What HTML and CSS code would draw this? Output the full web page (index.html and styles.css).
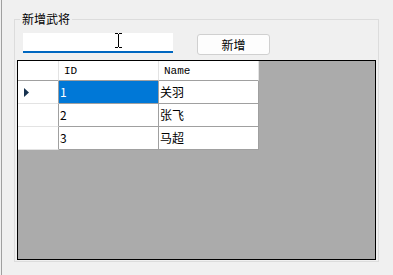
FILE: index.html
```html
<!DOCTYPE html>
<html lang="zh-CN">
<head>
<meta charset="utf-8">
<title>新增武将</title>
<link rel="stylesheet" href="styles.css">
</head>
<body>
<div class="window">
  <fieldset class="group">
    <legend class="group-title">新增武将</legend>
    <div class="toolbar">
      <div class="textbox-wrap">
        <input class="textbox" type="text" value="">
        <svg class="ibeam" width="7" height="16" viewBox="0 0 7 16" aria-hidden="true">
          <rect x="0" y="0" width="3" height="1" fill="#000"/>
          <rect x="4" y="0" width="3" height="1" fill="#000"/>
          <rect x="3" y="1" width="1" height="13" fill="#000"/>
          <rect x="0" y="14" width="3" height="1" fill="#000"/>
          <rect x="4" y="14" width="3" height="1" fill="#000"/>
        </svg>
      </div>
      <button class="btn" type="button">新增</button>
    </div>
    <div class="grid">
      <div class="table">
        <div class="cell head"></div>
        <div class="cell head">ID</div>
        <div class="cell head">Name</div>

        <div class="cell rowhead">
          <svg class="current" width="6" height="9" viewBox="0 0 6 9" aria-hidden="true"><polygon points="0,0 5,4.5 0,9" fill="#17324f"/></svg>
        </div>
        <div class="cell data selected">1</div>
        <div class="cell data">关羽</div>

        <div class="cell rowhead"></div>
        <div class="cell data">2</div>
        <div class="cell data">张飞</div>

        <div class="cell rowhead"></div>
        <div class="cell data">3</div>
        <div class="cell data">马超</div>
      </div>
    </div>
  </fieldset>
</div>
</body>
</html>
```

FILE: styles.css
```css
* {
  box-sizing: border-box;
}

html,
body {
  margin: 0;
  padding: 0;
}

body {
  width: 393px;
  height: 275px;
  overflow: hidden;
  background: #f0f0f0;
  color: #000;
  font-family: "Noto Sans CJK SC", "Noto Sans", sans-serif;
  font-size: 12px;
}

.window {
  height: 275px;
  margin-left: 1px;
  border-left: 1px solid #a0a0a0;
  padding: 11px 0 0 12px;
}

.group {
  margin: 0;
  padding: 0;
  width: 365px;
  height: 251px;
  min-inline-size: 0;
  border: 1px solid #dcdcdc;
}

.group-title {
  margin-left: 5px;
  padding: 0 2px;
  font-size: 12px;
  line-height: 16px;
}

.toolbar {
  display: flex;
  align-items: flex-start;
  height: 22px;
  margin: 6px 0 0 8px;
}

.textbox-wrap {
  position: relative;
  width: 150px;
  height: 20px;
}

.textbox {
  display: block;
  width: 150px;
  height: 20px;
  margin: 0;
  padding: 0;
  border: 0;
  border-bottom: 2px solid #0067c0;
  background: #fff;
  outline: none;
}

.ibeam {
  position: absolute;
  left: 92px;
  top: 0;
}

.btn {
  width: 73px;
  height: 21px;
  margin: 1px 0 0 24px;
  padding: 0;
  border: 1px solid #d0d0d0;
  border-radius: 3px;
  background: #fdfdfd;
  color: #000;
  font-family: "Noto Sans CJK SC", sans-serif;
  font-size: 12px;
  line-height: 19px;
}

.grid {
  width: 359px;
  height: 200px;
  margin: 5px 0 0 2px;
  border: 1px solid #000;
  background: #ababab;
}

.table {
  display: grid;
  grid-template-columns: 41px 100px 100px;
  grid-template-rows: 20px 23px 23px 23px;
  width: 241px;
}

.cell {
  display: flex;
  align-items: center;
  overflow: hidden;
  white-space: nowrap;
  background: #fff;
  border-right: 1px solid #a0a0a0;
  border-bottom: 1px solid #a0a0a0;
  line-height: 16px;
}

.head {
  border-right-color: #e3e3e3;
  padding-left: 5px;
  font-family: "Liberation Mono", monospace;
  font-size: 11px;
}

.rowhead {
  border-bottom-color: #e3e3e3;
  padding-left: 6px;
}

.data {
  padding-left: 1px;
  font-size: 12px;
}

.selected {
  background: #0078d7;
  color: #fff;
}

.current {
  display: block;
}
```
